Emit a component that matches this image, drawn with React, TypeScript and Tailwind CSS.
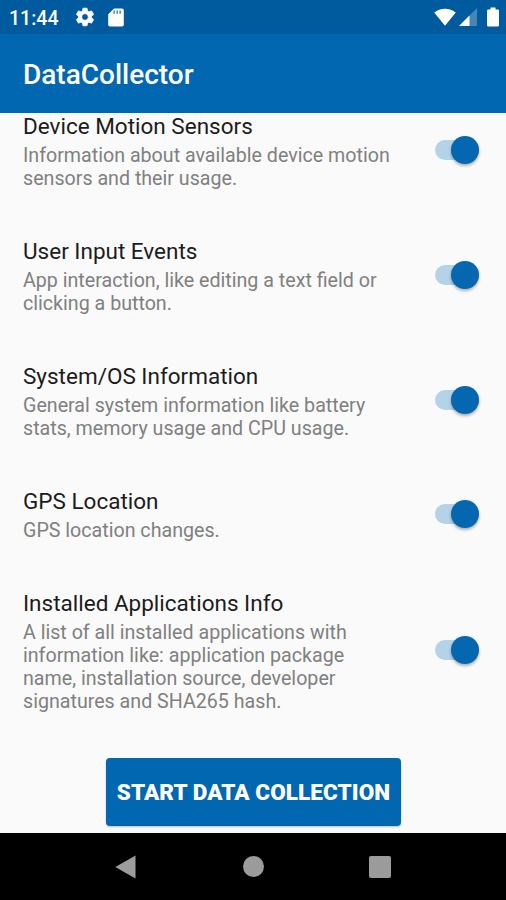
type Item = { title: string; lines: string[] };

const items: Item[] = [
  { title: "Device Motion Sensors", lines: ["Information about available device motion", "sensors and their usage."] },
  { title: "User Input Events", lines: ["App interaction, like editing a text field or", "clicking a button."] },
  { title: "System/OS Information", lines: ["General system information like battery", "stats, memory usage and CPU usage."] },
  { title: "GPS Location", lines: ["GPS location changes."] },
  {
    title: "Installed Applications Info",
    lines: [
      "A list of all installed applications with",
      "information like: application package",
      "name, installation source, developer",
      "signatures and SHA265 hash.",
    ],
  },
];

function Switch() {
  return (
    <div className="flex h-5 w-[44.5px] items-center justify-end rounded-full bg-[#b5d3e8]">
      <div className="size-7 shrink-0 rounded-full bg-[#0567b0] shadow-[0_2px_3px_rgba(0,0,0,0.3)]" />
    </div>
  );
}

function Row({ title, lines }: Item) {
  return (
    <div className="flex items-center justify-between pr-[27px] pl-[23px]">
      <div className="pt-[25.5px] pb-[22.5px] whitespace-nowrap">
        <h2 className="mb-[5px] text-[22.5px] leading-[26px] text-[#1c1c1c]">{title}</h2>
        <p className="text-[19.65px] leading-[23px] text-[#808080]">
          {lines.map((line) => (
            <span key={line} className="block">{line}</span>
          ))}
        </p>
      </div>
      <Switch />
    </div>
  );
}

function StatusBar() {
  return (
    <div className="flex h-[34px] items-center bg-[#005a9e] pl-[9px] text-white">
      <span className="w-[50px] pt-[3px] text-[19.5px] leading-none font-medium">11:44</span>
      <svg className="ml-[14.5px] size-[22px]" viewBox="0 0 24 24" fill="currentColor" stroke="currentColor" strokeWidth="0.8">
        <path d="M19.14 12.94c.04-.3.06-.61.06-.94 0-.32-.02-.64-.07-.94l2.03-1.58a.49.49 0 0 0 .12-.61l-1.92-3.32a.488.488 0 0 0-.59-.22l-2.39.96c-.5-.38-1.03-.7-1.62-.94l-.36-2.54a.484.484 0 0 0-.48-.41h-3.84c-.24 0-.43.17-.47.41l-.36 2.54c-.59.24-1.13.57-1.62.94l-2.39-.96c-.22-.08-.47 0-.59.22L2.74 8.87c-.12.21-.08.47.12.61l2.03 1.58c-.05.3-.09.63-.09.94s.02.64.07.94l-2.03 1.58a.49.49 0 0 0-.12.61l1.92 3.32c.12.22.37.29.59.22l2.39-.96c.5.38 1.03.7 1.62.94l.36 2.54c.05.24.24.41.48.41h3.84c.24 0 .44-.17.47-.41l.36-2.54c.59-.24 1.13-.56 1.62-.94l2.39.96c.22.08.47 0 .59-.22l1.92-3.32c.12-.22.07-.47-.12-.61l-2.01-1.58zM12 15.6c-1.98 0-3.6-1.62-3.6-3.6s1.62-3.6 3.6-3.6 3.6 1.62 3.6 3.6-1.62 3.6-3.6 3.6z" />
      </svg>
      <svg className="ml-[12.5px] h-[19px] w-4" viewBox="0 0 16 19">
        <path d="M6 0.5h8a1.8 1.8 0 0 1 1.8 1.8v14.4a1.8 1.8 0 0 1-1.8 1.8H2a1.8 1.8 0 0 1-1.8-1.8V6.3z" fill="#fff" />
        <path d="M6.2 2.5v3.2M9.2 2.5v3.2M12.2 2.5v3.2" stroke="#005a9e" strokeWidth="1.7" opacity="0.65" />
      </svg>
      <svg className="ml-auto h-[18px] w-[22px]" viewBox="0 0 22 18">
        <path d="M0.2 4.5C6 -0.6 16 -0.6 21.8 4.5L11 17.8z" fill="#fff" />
      </svg>
      <svg className="ml-[3px] size-[18px]" viewBox="0 0 18 18">
        <path d="M0 18L18 0V18z" fill="#4784b8" />
        <path d="M0 18L10.5 7.5V18z" fill="#fff" />
      </svg>
      <svg className="mr-[7.5px] ml-[9.5px] h-5 w-3" viewBox="0 0 12 20">
        <path d="M3.5 0.5h5v2h2.2a1.3 1.3 0 0 1 1.3 1.3v14.4a1.3 1.3 0 0 1-1.3 1.3H1.3A1.3 1.3 0 0 1 0 18.2V3.8a1.3 1.3 0 0 1 1.3-1.3h2.2z" fill="#fff" />
      </svg>
    </div>
  );
}

export default function App() {
  return (
    <div className="flex h-[900px] w-[506px] flex-col overflow-hidden bg-[#fafafa] font-[Roboto,sans-serif]">
      <StatusBar />
      <header className="flex h-[79px] items-center bg-[#0167b1] pt-[3px] pl-[23px]">
        <h1 className="text-[28px] leading-none font-medium text-white">DataCollector</h1>
      </header>
      <main className="flex h-[720px] flex-col overflow-hidden">
        <div className="-mt-[25.5px]">
          {items.map((item) => (
            <Row key={item.title} {...item} />
          ))}
        </div>
        <button className="mt-[22.5px] ml-[106px] h-[67.5px] w-[295px] shrink-0 rounded bg-[#0167b1] pt-[3px] text-[22.5px] font-black tracking-[0.08px] whitespace-nowrap text-white shadow-[0_1px_2px_rgba(0,0,0,0.25)]">
          START DATA COLLECTION
        </button>
      </main>
      <nav className="flex flex-1 items-center bg-black pl-[115px] text-[#9b9b9b]">
        <svg className="h-6 w-[21px]" viewBox="0 0 21 24" fill="currentColor">
          <path d="M0.3 12L20.5 0.5v23z" />
        </svg>
        <div className="ml-[107px] size-[21px] rounded-full bg-[#9b9b9b]" />
        <div className="ml-[105px] size-[22px] rounded-[2px] bg-[#9b9b9b]" />
      </nav>
    </div>
  );
}
